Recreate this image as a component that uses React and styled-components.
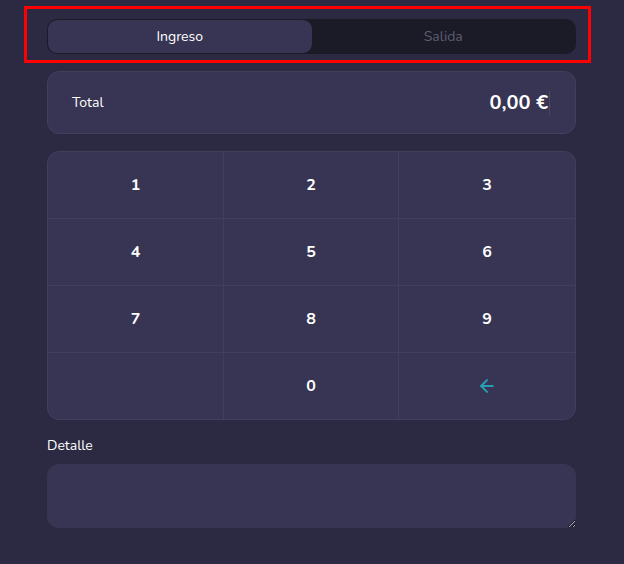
import React, { useState } from 'react';
import styled, { createGlobalStyle } from 'styled-components';
import { ArrowLeft } from 'lucide-react';

const GlobalStyle = createGlobalStyle`
    html, body {
        margin: 0;
        padding: 0;
        background: #2b2a42;
    }
    body {
        font-family: "Nunito", Lato, "Open Sans", sans-serif;
        color: #fff;
    }
`;

const Page = styled.div`
    position: relative;
    min-height: 564px;
    padding: 19px 48px 0 47px;
    box-sizing: border-box;
    display: flex;
    flex-direction: column;
`;

const Highlight = styled.div`
    position: absolute;
    left: 24px;
    top: 6px;
    width: 567px;
    height: 57px;
    border: 3px solid #ff0000;
    box-sizing: border-box;
    pointer-events: none;
`;

const Toggle = styled.div`
    display: flex;
    height: 35px;
    background: #1b1b28;
    border-radius: 10px;
    padding: 1px;
    box-sizing: border-box;
`;

const ToggleButton = styled.button`
    flex: 1;
    border: none;
    border-radius: 9px;
    background: ${({ active }) => (active ? '#373553' : 'transparent')};
    color: ${({ active }) => (active ? '#ffffff' : '#5d5c70')};
    font-family: inherit;
    font-size: 14px;
    cursor: pointer;
`;

const TotalCard = styled.div`
    margin-top: 17px;
    height: 63px;
    box-sizing: border-box;
    display: flex;
    align-items: center;
    justify-content: space-between;
    padding: 0 25px 0 24px;
    background: #373553;
    border: 1px solid #413f5e;
    border-radius: 12px;
`;

const Label = styled.div`
    font-size: 14px;
`;

const Amount = styled.div`
    font-size: 20px;
    font-weight: 700;
    padding-right: 1px;
    border-right: 1px solid #4a4868;
    line-height: 24px;
`;

const Keypad = styled.div`
    margin-top: 17px;
    display: grid;
    grid-template-columns: 176px 175px 1fr;
    grid-template-rows: 67px 67px 67px 66px;
    background: #373553;
    border: 1px solid #413f5e;
    border-radius: 12px;
    overflow: hidden;
`;

const Key = styled.button`
    border: none;
    border-right: ${({ last }) => (last ? 'none' : '1px solid #413f5e')};
    border-bottom: ${({ bottom }) => (bottom ? 'none' : '1px solid #413f5e')};
    background: transparent;
    color: #fff;
    font-family: inherit;
    font-size: 16px;
    font-weight: 700;
    display: flex;
    align-items: center;
    justify-content: center;
    cursor: pointer;
`;

const FieldLabel = styled.label`
    margin-top: 16px;
    font-size: 14px;
`;

const Detail = styled.textarea`
    margin-top: 9px;
    height: 64px;
    box-sizing: border-box;
    background: #373553;
    border: none;
    border-radius: 12px;
    color: #fff;
    font-family: inherit;
    font-size: 14px;
    padding: 10px 14px;
    resize: vertical;
    outline: none;
`;

const keys = ['1', '2', '3', '4', '5', '6', '7', '8', '9', '', '0', 'back'];

export default function App() {
    const [mode, setMode] = useState('in');

    return (
        <Page>
            <GlobalStyle />
            <Toggle>
                <ToggleButton active={mode === 'in'} onClick={() => setMode('in')}>Ingreso</ToggleButton>
                <ToggleButton active={mode === 'out'} onClick={() => setMode('out')}>Salida</ToggleButton>
            </Toggle>
            <Highlight />

            <TotalCard>
                <Label>Total</Label>
                <Amount>0,00 €</Amount>
            </TotalCard>

            <Keypad>
                {keys.map((k, i) => (
                    <Key key={i} last={i % 3 === 2} bottom={i >= 9}>
                        {k === 'back' ? <ArrowLeft size={20} color="#2a9cb4" strokeWidth={2.4} /> : k}
                    </Key>
                ))}
            </Keypad>

            <FieldLabel>Detalle</FieldLabel>
            <Detail />
        </Page>
    );
}
